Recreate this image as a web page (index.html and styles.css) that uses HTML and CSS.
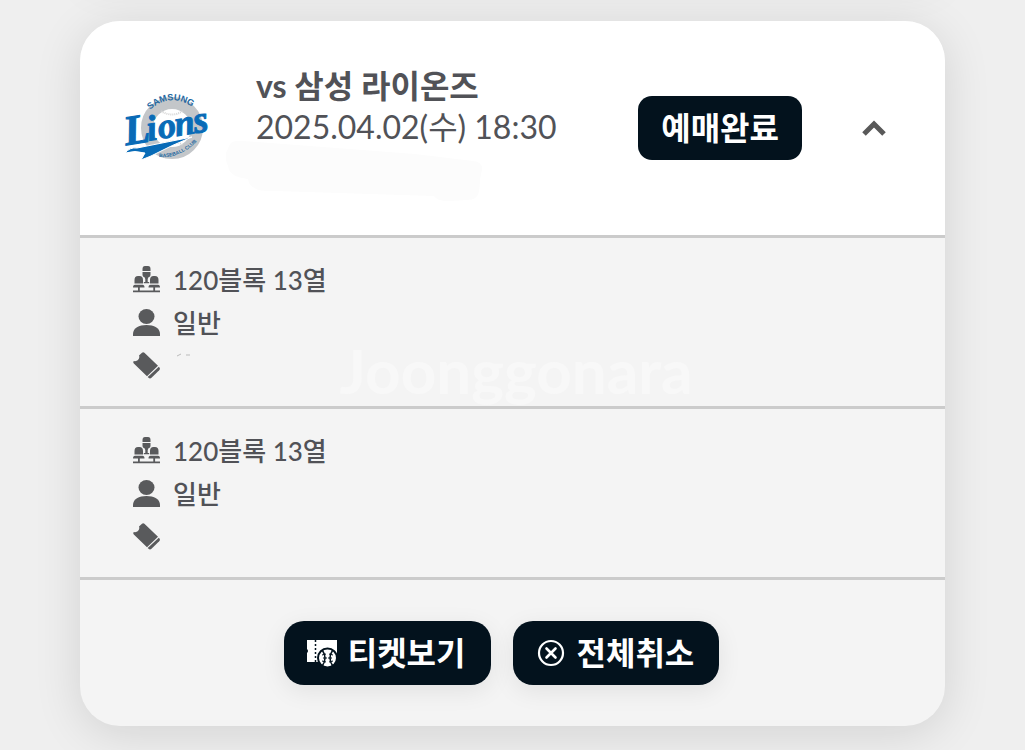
FILE: index.html
```html
<!DOCTYPE html>
<html lang="ko">
<head>
<meta charset="utf-8">
<meta name="viewport" content="width=device-width, initial-scale=1">
<title>예매내역</title>
<link rel="stylesheet" href="styles.css">
</head>
<body>
<svg class="defs" aria-hidden="true">
  <symbol id="seats" viewBox="0 0 27 27">
    <path d="M9.500 5V3Q9.500 0 12 0h3q2.500 0 2.500 3v2z"/>
    <path d="M9.500 6h8v3q0 2-2 2.200L14.700 13v3h1.500v1.200h-5.400V16h1.500v-3l-.8-1.800q-2-.2-2-2.200z"/>
    <path d="M1.500 17.500V14q0-4 3.500-4h1.500Q10 10 10 14v3.500zM17 17.500V14q0-4 3.500-4H22q3.500 0 3.500 4v3.500z"/>
    <path d="M0 21.500Q0 18.700 2 18.700h7.500q2 0 2 2.800zM15.500 21.500q0-2.800 2-2.800H25q2 0 2 2.800z"/>
    <path d="M5 21h1.800v4H5zM20.300 21h1.800v4h-1.800zM0 24.500h27v1.800H0z"/>
  </symbol>
  <symbol id="person" viewBox="0 0 27 27">
    <ellipse cx="13.500" cy="7.500" rx="8" ry="7.500"/>
    <path d="M0 27v-2c0-6 6-9 13.500-9S27 19 27 25v2z"/>
  </symbol>
  <symbol id="ticket" viewBox="0 0 27 27">
    <path d="M.8 9Q3.500 9.500 5 8q2-2 1-4.500L9 .8q1.200-1 2.400 0L25 13.800 14 24.300.8 11.500Q-.3 10.300.8 9z"/>
    <path d="M25.800 14.800l.7.700q1 1.500-.3 2.800l-7.700 7.500q-1.500 1.200-3 0l-.8-.8z"/>
  </symbol>
</svg>
<div class="previous"></div>
<main class="page">
  <section class="card">
    <header class="game">
      <svg class="smudge" viewBox="0 0 260 66" aria-hidden="true"><path d="M5 4Q9 0 18 1L190 14l58 7q10 1 9 9l-2 9q0 5-1 12-1 9-12 9l-17 1q-12 1-16-5L50 51Q24 52 23 39 4 37 3 26 0 21 1 13z"/></svg>
      <svg class="logo" viewBox="0 0 86 64" role="img" aria-label="삼성 라이온즈">
        <circle cx="47" cy="32" r="25" fill="none" stroke="#c3c6c9" stroke-width="12"/>
        <path d="M36 15q11 7 22 0M36 49q11-7 22 0" fill="none" stroke="#d4d4d4" stroke-width="2" stroke-dasharray="1 1"/>
        <path id="arcTop" d="M25 14Q46-5 70 13" fill="none"/>
        <path id="arcBottom" d="M34 61Q57 63 76 41" fill="none"/>
        <text class="logo-ring"><textPath href="#arcTop">SAMSUNG</textPath></text>
        <text class="logo-club"><textPath href="#arcBottom">BASEBALL CLUB</textPath></text>
        <g class="logo-word" transform="rotate(-9 3 49)"><text x="1" y="49" font-size="42">L</text><text x="24" y="48" font-size="36">i</text><text x="35" y="48" font-size="36">o</text><text x="52" y="48" font-size="36">n</text><text x="71" y="48" font-size="38">s</text></g>
        <path d="M0 57Q5 51 12 52L67 41Q47 49 26 60l-10 4 4-7Q10 54 0 57z" fill="#086bb7" stroke="#fff" stroke-width="1"/>
      </svg>
      <div class="info">
        <h1 class="opponent">vs 삼성 라이온즈</h1>
        <p class="date">2025.04.02(수) 18:30</p>
      </div>
      <span class="badge">예매완료</span>
      <button class="toggle" type="button" aria-label="접기" aria-expanded="true">
        <svg viewBox="0 0 24 16" aria-hidden="true"><path d="M2 14L12 4l10 10" fill="none" stroke="#595959" stroke-width="5"/></svg>
      </button>
    </header>
    <ul class="seat">
      <li><svg class="icon"><use href="#seats"/></svg>120블록 13열</li>
      <li><svg class="icon"><use href="#person"/></svg>일반</li>
      <li><svg class="icon"><use href="#ticket"/></svg><svg class="trace" viewBox="0 0 20 30" aria-hidden="true"><path d="M4 5l4-2M13 4h4" stroke="#bbb"/></svg></li>
    </ul>
    <ul class="seat">
      <li><svg class="icon"><use href="#seats"/></svg>120블록 13열</li>
      <li><svg class="icon"><use href="#person"/></svg>일반</li>
      <li><svg class="icon"><use href="#ticket"/></svg></li>
    </ul>
    <footer class="actions">
      <button class="action" type="button">
        <svg class="action-icon" viewBox="0 0 30 30" aria-hidden="true">
          <path d="M0 2h30v22H0v-9q2-2 0-4z" fill="#fff"/>
          <path d="M8.500 2v22" stroke="#03121d" stroke-width="1.500" stroke-dasharray="2 2"/>
          <circle cx="20.500" cy="20" r="9.500" fill="#fff" stroke="#03121d" stroke-width="2"/>
          <path d="M15.500 12.500q5 7.500 0 15M25.500 12.500q-5 7.500 0 15" fill="none" stroke="#03121d" stroke-width="1.500"/>
          <path d="M15 17l4-1M16 20h4M15 23l4 1M26 17l-4-1M25 20h-4M26 23l-4 1" stroke="#03121d" stroke-width="1"/>
        </svg>티켓보기
      </button>
      <button class="action" type="button">
        <svg class="action-icon" viewBox="0 0 30 30" aria-hidden="true">
          <circle cx="15" cy="15" r="12" fill="none" stroke="#fff" stroke-width="2.200"/>
          <path d="M10.500 10.500l9 9M19.500 10.500l-9 9" stroke="#fff" stroke-width="2.600" stroke-linecap="round"/>
        </svg>전체취소
      </button>
    </footer>
    <div class="watermark">Joonggonara</div>
  </section>
</main>
</body>
</html>
```
FILE: styles.css
```css
* {
  box-sizing: border-box;
}

body {
  margin: 0;
  background: #efefef;
  color: #515257;
  font-family: Lato, "Noto Sans CJK KR", sans-serif;
}

h1,
p,
ul {
  margin: 0;
  padding: 0;
}

.defs {
  display: none;
}

.previous {
  position: absolute;
  top: -40px;
  left: 80px;
  right: 80px;
  height: 26px;
  border-radius: 13px;
  box-shadow: 0 4px 40px rgba(0, 0, 0, 0.05);
}

.page {
  padding: 21px 80px 24px;
}

.card {
  position: relative;
  border-radius: 40px;
  background: #f4f4f4;
  box-shadow: 0 8px 48px rgba(0, 0, 0, 0.12);
}

.game {
  position: relative;
  display: flex;
  align-items: center;
  min-height: 217px;
  padding: 44px 59px 44px 45px;
  border-bottom: 3px solid #cbcbcb;
  border-radius: 40px 40px 0 0;
  background: #fff;
}

.smudge {
  position: absolute;
  top: 119px;
  left: 145px;
  width: 260px;
  height: 66px;
  fill: #fcfcfc;
}

.logo {
  flex: none;
  width: 86px;
  height: 64px;
  margin-right: 45px;
  overflow: visible;
}

.logo-ring,
.logo-club {
  fill: #22679f;
  font-family: "Liberation Sans", sans-serif;
  font-size: 9px;
  font-weight: 700;
}

.logo-club {
  font-size: 5px;
}

.logo-word {
  fill: #086bb7;
  stroke: #086bb7;
  stroke-width: 1px;
  font-family: "Liberation Serif", serif;
  font-style: italic;
  font-weight: 700;
}

.info {
  position: relative;
  flex: 1;
  padding-bottom: 44px;
}

.opponent,
.date {
  font-size: 32px;
  line-height: 41px;
  white-space: nowrap;
}

.opponent {
  font-weight: 700;
}

.date {
  font-weight: 400;
}

.badge {
  display: flex;
  align-items: center;
  height: 64px;
  margin-right: 60px;
  padding: 0 23px 4px;
  border-radius: 14px;
  background: #03121d;
  color: #fff;
  font-size: 32px;
  font-weight: 700;
}

.toggle {
  display: flex;
  padding: 0;
  border: 0;
  background: none;
}

.toggle svg {
  width: 24px;
  height: 16px;
}

.seat {
  padding: 20px 53px 19px;
  border-bottom: 3px solid #cbcbcb;
  list-style: none;
  font-size: 26px;
  font-weight: 500;
  line-height: 42px;
}

.seat li {
  display: flex;
  align-items: center;
  gap: 13px;
  height: 43px;
}

.icon {
  width: 27px;
  height: 27px;
  fill: #595a5c;
}

.trace {
  width: 20px;
  height: 30px;
}

.actions {
  display: flex;
  flex-wrap: wrap;
  justify-content: center;
  gap: 22px;
  padding: 41px 22px 41px 0;
}

.action {
  display: flex;
  align-items: center;
  gap: 11px;
  height: 64px;
  padding: 0 25px 4px 23px;
  border: 0;
  border-radius: 20px;
  background: #03121d;
  box-shadow: 0 6px 24px rgba(0, 0, 0, 0.08);
  color: #fff;
  font: inherit;
  font-size: 32px;
  font-weight: 700;
}

.action-icon {
  width: 30px;
  height: 30px;
  margin-top: 4px;
}

.watermark {
  position: absolute;
  top: 314px;
  left: 30%;
  color: #f8f8f8;
  font-size: 62px;
  font-weight: 700;
  line-height: 70px;
  pointer-events: none;
}
```
